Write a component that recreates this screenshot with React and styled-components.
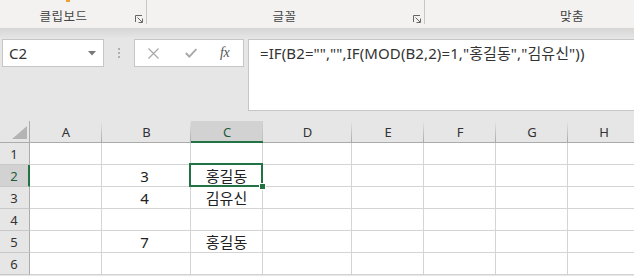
import React from "react";
import styled, { createGlobalStyle } from "styled-components";

const Global = createGlobalStyle`
  html, body { margin: 0; padding: 0; }
  body {
    background: #e6e6e6;
    overflow: hidden;
    font-family: "Noto Sans", "Noto Sans CJK KR", sans-serif;
    width: 634px;
    height: 276px;
  }
`;

const Page = styled.div`
  width: 634px;
  height: 276px;
  display: flex;
  flex-direction: column;
  background: #e6e6e6;
  overflow: hidden;
`;

const Ribbon = styled.div`
  height: 28px;
  flex: none;
  display: flex;
  background: #f3f2f1;
  position: relative;
`;

const RibbonShadow = styled.div`
  height: 11px;
  flex: none;
  background: linear-gradient(to bottom, #d6d6d6, #e6e6e6);
`;

const Group = styled.div`
  width: ${(p) => p.$w}px;
  flex: none;
  display: flex;
  align-items: flex-end;
  justify-content: center;
  position: relative;
  padding-bottom: 4px;
  box-sizing: border-box;
  background: ${(p) =>
    p.$sep
      ? "linear-gradient(#c8c6c4, #c8c6c4) right top / 1px 24px no-repeat"
      : "none"};
`;

const GroupLabel = styled.span`
  font-family: "Noto Sans CJK KR", sans-serif;
  font-size: 12.5px;
  line-height: 16px;
  color: #444;
  letter-spacing: 0.5px;
  margin-right: ${(p) => p.$shift || 0}px;
`;

const Launcher = styled.svg`
  position: absolute;
  right: ${(p) => p.$r}px;
  bottom: 5px;
  width: 8px;
  height: 8px;
`;

const OrangeMark = styled.div`
  position: absolute;
  left: 66px;
  top: 0;
  width: 4px;
  height: 2px;
  background: #f0a030;
`;

const FormulaBar = styled.div`
  display: flex;
  align-items: flex-start;
  height: 72px;
  flex: none;
  padding-left: 2px;
`;

const NameBox = styled.div`
  width: 102px;
  height: 28px;
  box-sizing: border-box;
  border: 1px solid #c6c6c6;
  background: #fff;
  display: flex;
  align-items: center;
  padding: 0 6px 0 6px;
  justify-content: space-between;
`;

const NameText = styled.span`
  font-size: 15px;
  color: #333;
  font-family: "Noto Sans", sans-serif;
`;

const Caret = styled.svg`
  width: 8px;
  height: 5px;
  margin-top: 1px;
  margin-right: 1px;
`;

const DotsZone = styled.div`
  width: 30px;
  height: 28px;
  display: flex;
  flex-direction: column;
  align-items: center;
  justify-content: center;
  gap: 2px;
`;

const Dot = styled.span`
  width: 2px;
  height: 2px;
  background: #b0b0b0;
`;

const FxBox = styled.div`
  width: 110px;
  height: 28px;
  box-sizing: border-box;
  border: 1px solid #c6c6c6;
  background: #fff;
  display: flex;
  align-items: center;
  padding-left: 13px;
  gap: 0;
`;

const IconSlot = styled.div`
  width: ${(p) => p.$w}px;
  display: flex;
  align-items: center;
`;

const FxText = styled.span`
  font-family: "Liberation Serif", "DejaVu Serif", serif;
  font-style: italic;
  font-size: 14px;
  color: #555;
  letter-spacing: -0.5px;
`;

const FormulaInput = styled.div`
  margin-left: 4px;
  flex: 1;
  height: 72px;
  box-sizing: border-box;
  border: 1px solid #c6c6c6;
  border-right: none;
  background: #fff;
  padding: 2px 0 0 11px;
  font-size: 15px;
  line-height: 22px;
  letter-spacing: 0.1px;
  color: #333;
  font-family: "Noto Sans", "Noto Sans CJK KR", sans-serif;
  white-space: nowrap;
`;

const Grid = styled.div`
  margin-top: 10px;
  display: grid;
  grid-template-columns: 30px 72px 89px 72px 89px 72px 72px 72px 72px;
  grid-auto-rows: 22px;
  background: #fff;
  width: 640px;
`;

const Corner = styled.div`
  background: #e6e6e6;
  box-sizing: border-box;
  border-right: 1px solid #ababab;
  border-bottom: 1px solid #ababab;
  display: flex;
  align-items: flex-end;
  justify-content: flex-end;
  padding: 0 2px 3px 0;
`;

const ColHead = styled.div`
  box-sizing: border-box;
  background: ${(p) =>
    p.$sel
      ? "linear-gradient(to bottom, #d2d2d2, #bdbdbd) right top / 1px 100% no-repeat, #d2d2d2"
      : "linear-gradient(to bottom, #e6e6e6, #a9a9a9) right top / 1px 100% no-repeat, #e6e6e6"};
  border-bottom: ${(p) => (p.$sel ? "2px solid #217346" : "1px solid #ababab")};
  display: flex;
  align-items: center;
  justify-content: center;
  font-family: "Noto Sans", sans-serif;
  font-size: 13px;
  color: ${(p) => (p.$sel ? "#1e5c3a" : "#333")};
  padding-top: ${(p) => (p.$sel ? "1px" : "0")};
`;

const RowHead = styled.div`
  box-sizing: border-box;
  background: ${(p) => (p.$sel ? "#d2d2d2" : "#e6e6e6")};
  border-right: ${(p) => (p.$sel ? "2px solid #217346" : "1px solid #ababab")};
  border-bottom: 1px solid #c8c8c8;
  display: flex;
  align-items: center;
  justify-content: center;
  font-family: "Noto Sans", sans-serif;
  font-size: 13px;
  color: ${(p) => (p.$sel ? "#1e5c3a" : "#333")};
  padding-right: ${(p) => (p.$sel ? "0" : "1px")};
`;

const Cell = styled.div`
  box-sizing: border-box;
  border-right: 1px solid #d4d4d4;
  border-bottom: 1px solid #d4d4d4;
  display: flex;
  align-items: center;
  justify-content: center;
  font-family: "Noto Sans", "Noto Sans CJK KR", sans-serif;
  font-size: 15px;
  color: #222;
  position: relative;

  ${(p) =>
    p.$active &&
    `
    &::after {
      content: "";
      position: absolute;
      left: -2px;
      top: -2px;
      right: -1px;
      bottom: -1px;
      border: 2px solid #217346;
      pointer-events: none;
    }
    &::before {
      content: "";
      position: absolute;
      right: -4px;
      bottom: -4px;
      width: 5px;
      height: 5px;
      background: #217346;
      border: 1px solid #fff;
      z-index: 2;
    }
  `}
`;

const CellText = styled.span`
  margin-left: ${(p) => p.$dx || 0}px;
`;

const LauncherIcon = ({ r }) => (
  <Launcher $r={r} viewBox="0 0 8 8">
    <path d="M0.5 7 V0.5 H7" fill="none" stroke="#666" strokeWidth="1" />
    <path d="M2.5 2.5 L7 7" stroke="#666" strokeWidth="1" />
    <path d="M3.5 7.5 H7.5 V3.5" fill="none" stroke="#666" strokeWidth="1" />
  </Launcher>
);

const cols = ["A", "B", "C", "D", "E", "F", "G", "H"];
const data = {
  2: { B: "3", C: "홍길동" },
  3: { B: "4", C: "김유신" },
  5: { B: "7", C: "홍길동" },
};

export default function App() {
  return (
    <Page>
      <Global />
      <Ribbon>
        <OrangeMark />
        <Group $w={147} $sep>
          <GroupLabel $shift={20}>클립보드</GroupLabel>
          <LauncherIcon r={4} />
        </Group>
        <Group $w={278} $sep>
          <GroupLabel $shift={3}>글꼴</GroupLabel>
          <LauncherIcon r={4} />
        </Group>
        <Group $w={209}>
          <GroupLabel $shift={-85}>맞춤</GroupLabel>
        </Group>
      </Ribbon>
      <RibbonShadow />
      <FormulaBar>
        <NameBox>
          <NameText>C2</NameText>
          <Caret viewBox="0 0 8 5">
            <path d="M0 0 H8 L4 4.5 Z" fill="#777" />
          </Caret>
        </NameBox>
        <DotsZone>
          <Dot />
          <Dot />
          <Dot />
        </DotsZone>
        <FxBox>
          <IconSlot $w={37}>
            <svg width="11" height="11" viewBox="0 0 11 11">
              <path d="M0.5 0.5 L10.5 10.5 M10.5 0.5 L0.5 10.5" stroke="#a8a8a8" strokeWidth="1.2" />
            </svg>
          </IconSlot>
          <IconSlot $w={35}>
            <svg width="12" height="10" viewBox="0 0 12 10">
              <path d="M0.8 5 L4.3 8.6 L11.4 1" fill="none" stroke="#a8a8a8" strokeWidth="1.8" />
            </svg>
          </IconSlot>
          <IconSlot $w={20}>
            <FxText>fx</FxText>
          </IconSlot>
        </FxBox>
        <FormulaInput>=IF(B2="","",IF(MOD(B2,2)=1,"홍길동","김유신"))</FormulaInput>
      </FormulaBar>
      <Grid>
        <Corner>
          <svg width="15" height="13" viewBox="0 0 15 13">
            <polygon points="15,0 15,13 0,13" fill="#b4b4b4" />
          </svg>
        </Corner>
        {cols.map((c) => (
          <ColHead key={c} $sel={c === "C"}>
            {c}
          </ColHead>
        ))}
        {[1, 2, 3, 4, 5, 6].map((r) => (
          <React.Fragment key={r}>
            <RowHead $sel={r === 2}>{r}</RowHead>
            {cols.map((c) => {
              const v = data[r] && data[r][c];
              return (
                <Cell key={c} $active={r === 2 && c === "C"}>
                  {v && <CellText $dx={c === "B" ? -3 : 0}>{v}</CellText>}
                </Cell>
              );
            })}
          </React.Fragment>
        ))}
      </Grid>
    </Page>
  );
}
